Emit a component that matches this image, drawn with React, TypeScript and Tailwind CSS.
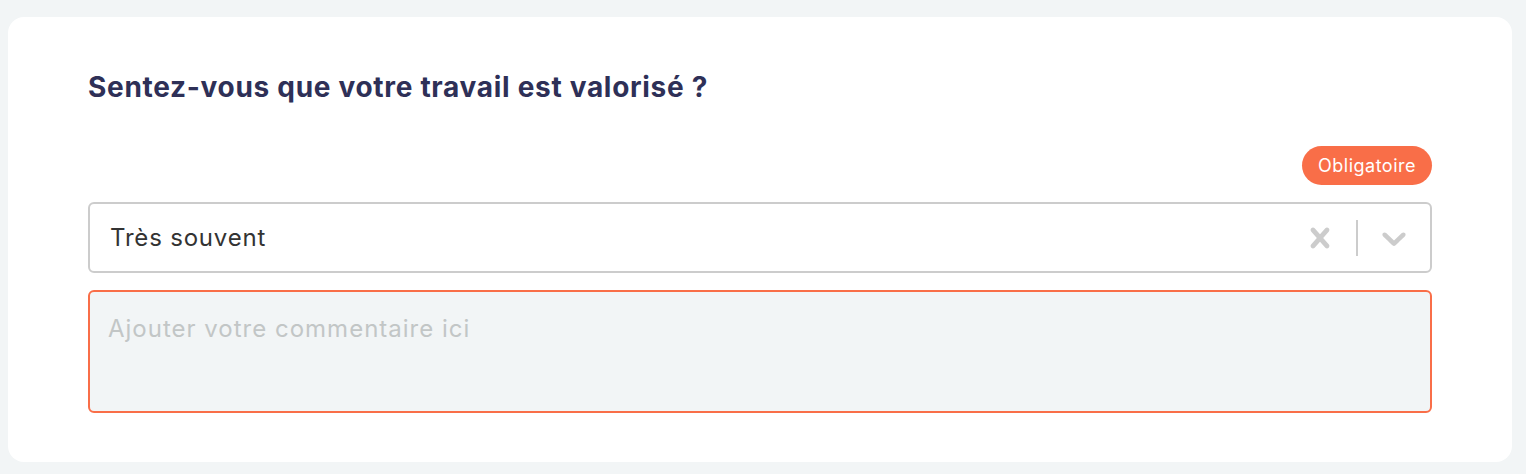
function CrossIcon() {
  return (
    <svg viewBox="0 0 20 20" className="h-10 w-10 fill-[#cccccc]" aria-hidden="true">
      <path d="M14.348 14.849c-0.469 0.469-1.229 0.469-1.697 0l-2.651-3.030-2.651 3.029c-0.469 0.469-1.229 0.469-1.697 0-0.469-0.469-0.469-1.229 0-1.697l2.758-3.15-2.759-3.152c-0.469-0.469-0.469-1.228 0-1.697s1.228-0.469 1.697 0l2.652 3.031 2.651-3.031c0.469-0.469 1.228-0.469 1.697 0s0.469 1.229 0 1.697l-2.758 3.152 2.758 3.15c0.469 0.469 0.469 1.229 0 1.698z" />
    </svg>
  );
}

function DownChevron() {
  return (
    <svg viewBox="0 0 20 20" className="h-10 w-10 fill-[#cccccc]" aria-hidden="true">
      <path d="M4.516 7.548c0.436-0.446 1.043-0.481 1.576 0l3.908 3.747 3.908-3.747c0.533-0.481 1.141-0.446 1.574 0 0.436 0.445 0.408 1.197 0 1.615-0.406 0.418-4.695 4.502-4.695 4.502-0.217 0.223-0.502 0.335-0.787 0.335s-0.57-0.112-0.789-0.335c0 0-4.287-4.084-4.695-4.502s-0.436-1.17 0-1.615z" />
    </svg>
  );
}

export default function App() {
  return (
    <div className="min-h-[474px] bg-[#f2f5f6] pt-[17px] pb-3 pl-2 pr-[14px] font-['Inter',sans-serif]">
      <div className="rounded-2xl bg-white px-20 pt-[53px] pb-[49px]">
        <h2 className="text-[28px] font-bold leading-[34px] tracking-[0.7px] text-[#2e3057]">
          Sentez-vous que votre travail est valorisé ?
        </h2>

        <div className="mt-[42px] flex justify-end">
          <span className="flex h-[39px] items-center rounded-full bg-[#f96e48] px-[16px] text-[18px] tracking-[0.5px] text-white">
            Obligatoire
          </span>
        </div>

        {/* Select */}
        <div className="mt-[17px] flex h-[71px] items-center rounded-md border-2 border-[#cccccc] bg-white pl-5">
          <span className="flex-1 text-[24px] tracking-[0.8px] text-[#333333]">Très souvent</span>
          <div className="flex items-center px-4">
            <CrossIcon />
          </div>
          <div className="h-9 w-[2px] bg-[#cccccc]" />
          <div className="flex items-center px-4">
            <DownChevron />
          </div>
        </div>

        {/* Comment */}
        <textarea
          className="mt-[17px] block h-[123px] w-full resize-none rounded-md border-2 border-[#f96e48] bg-[#f2f5f6] px-[18px] pt-[22px] text-[24px] leading-[29px] tracking-[1px] outline-none placeholder:text-[#c2c6c6]"
          placeholder="Ajouter votre commentaire ici"
        />
      </div>
    </div>
  );
}
